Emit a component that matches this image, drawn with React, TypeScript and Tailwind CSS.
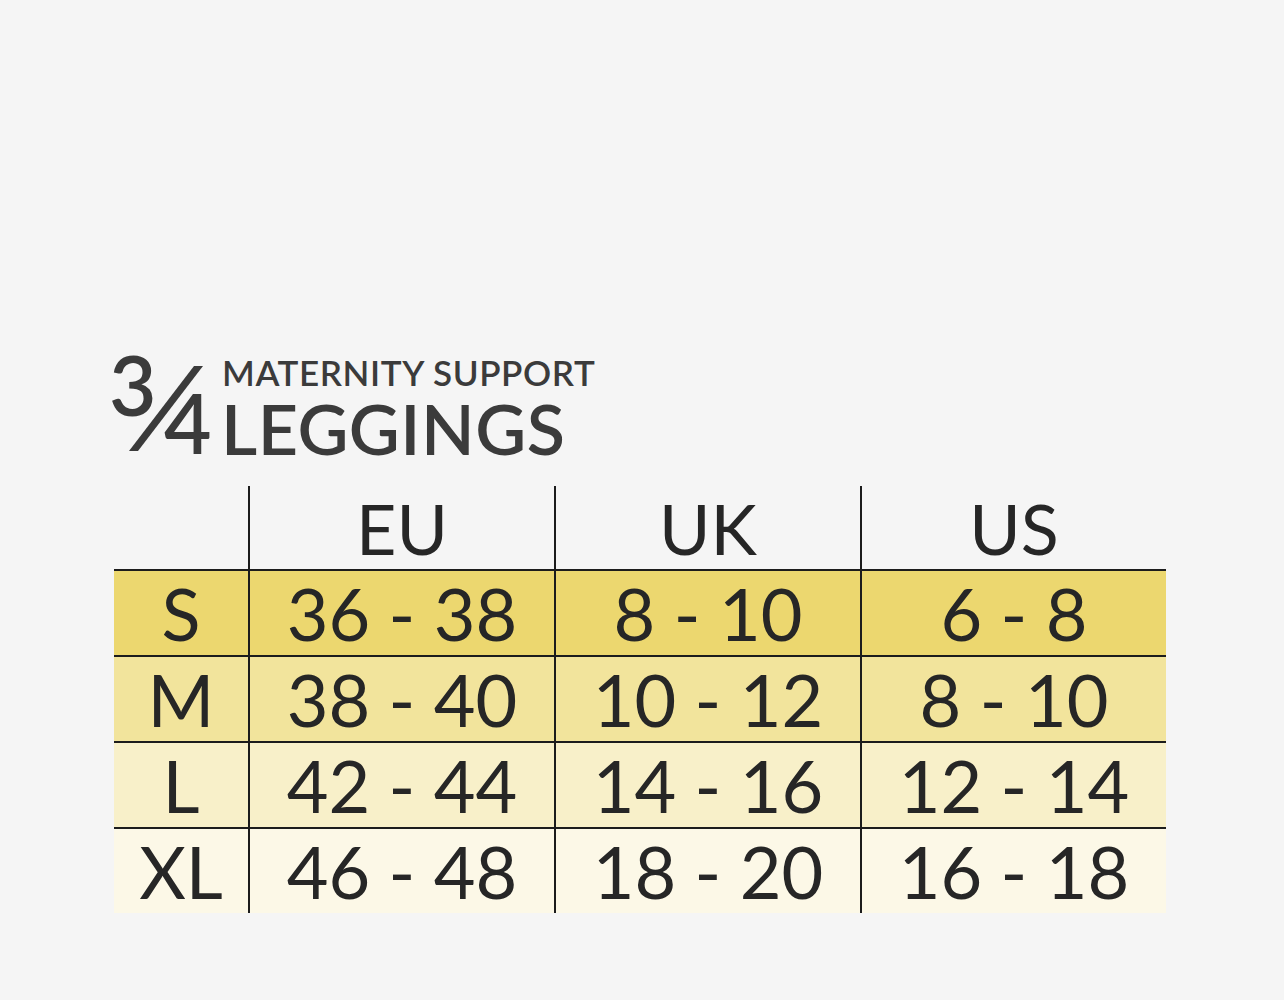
const columns = ["EU", "UK", "US"];

const sizes = [
  { size: "S", eu: "36 - 38", uk: "8 - 10", us: "6 - 8", bg: "bg-[#ecd76f]" },
  { size: "M", eu: "38 - 40", uk: "10 - 12", us: "8 - 10", bg: "bg-[#f2e49c]" },
  { size: "L", eu: "42 - 44", uk: "14 - 16", us: "12 - 14", bg: "bg-[#f8f0c9]" },
  { size: "XL", eu: "46 - 48", uk: "18 - 20", us: "16 - 18", bg: "bg-[#fcf8e7]" },
];

const widths = ["w-[136px]", "w-[306px]", "w-[306px]", "w-[304px]"];

const Fraction = () => (
  <div className="relative w-[109px] h-[100px] shrink-0 text-[#3b3b3b] font-semibold">
    <span className="absolute left-[-5px] top-[-12px] text-[82px] leading-none">3</span>
    <svg className="absolute left-0 top-0" width="109" height="100" viewBox="0 0 109 100">
      <polygon points="80,11 89,11 24,96 15,96" fill="#3b3b3b" />
    </svg>
    <span className="absolute left-[50px] top-[26px] text-[82px] leading-none">4</span>
  </div>
);

export default function App() {
  return (
    <div
      className="min-h-[1000px] w-full bg-[#f5f5f5] pt-[355px] pl-[114px]"
      style={{ fontFamily: "Lato, 'Noto Sans', sans-serif" }}
    >
      {/* Title */}
      <div className="flex">
        <Fraction />
        <div className="flex flex-col text-[#3b3b3b] font-semibold">
          <div className="ml-[-1px] text-[35px] leading-none tracking-[0.6px]">MATERNITY SUPPORT</div>
          <div className="ml-[-2px] mt-[3px] text-[70px] leading-none tracking-[0.5px]">LEGGINGS</div>
        </div>
      </div>

      {/* Size table */}
      <div className="mt-[23px] w-[1052px] text-[#262626]">
        <div className="flex h-[83px]">
          <div className={`${widths[0]} border-r-2 border-[#1c1c1c]`} />
          {columns.map((col, i) => (
            <div
              key={col}
              className={`${widths[i + 1]} flex items-center justify-center text-[70px] leading-none ${
                i < 2 ? "border-r-2 border-[#1c1c1c]" : ""
              }`}
            >
              {col}
            </div>
          ))}
        </div>
        {sizes.map((row) => (
          <div key={row.size} className={`flex h-[86px] border-t-2 border-[#1c1c1c] ${row.bg}`}>
            {[row.size, row.eu, row.uk, row.us].map((val, i) => (
              <div
                key={i}
                className={`${widths[i]} flex items-center justify-center text-[72px] leading-none ${
                  i < 3 ? "border-r-2 border-[#1c1c1c]" : ""
                }`}
              >
                {val}
              </div>
            ))}
          </div>
        ))}
      </div>
    </div>
  );
}
